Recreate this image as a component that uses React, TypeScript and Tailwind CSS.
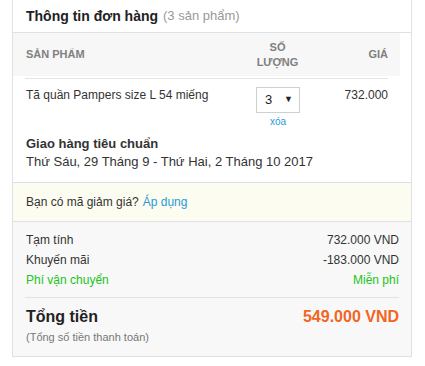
import React from 'react';

const font = { fontFamily: '"Liberation Sans", Arial, sans-serif' };

export default function App() {
  return (
    <div className="w-[425px] h-[366px] bg-white" style={font}>
      <div className="ml-[12px] w-[400px] border-x border-b border-[#dfe2e5] bg-white">
        {/* title */}
        <div className="h-[33px] border-b border-[#dfe2e5] pl-[13px] flex items-center">
          <span className="text-[14px] font-bold text-[#222]">Thông tin đơn hàng</span>
          <span className="ml-[5px] text-[13px] text-[#999]">(3 sản phẩm)</span>
        </div>

        {/* table header */}
        <div className="h-[43px] bg-[#f7f7f7] px-[12px] grid grid-cols-[220px_64px_1fr] w-[387px] items-center text-[11px] font-bold text-[#808080]">
          <div className="pl-[1px]">SẢN PHẨM</div>
          <div className="text-center leading-[15px] pl-[1px]">
            SỐ
            <br />
            LƯỢNG
          </div>
          <div className="text-right">GIÁ</div>
        </div>

        {/* product row */}
        <div className="mx-[12px] mt-[2px] w-[363px] border-t border-[#e4e4e4] grid grid-cols-[220px_64px_1fr] pt-[6px]">
          <div className="text-[12px] text-[#333] leading-[16px] pt-[2px] pl-[1px]">Tã quần Pampers size L 54 miếng</div>
          <div className="flex flex-col items-center pl-[2px]">
            <div className="mt-[2px] w-[44px] h-[26px] border border-[#cfcfcf] flex items-center justify-between pl-[8px] pr-[6px] text-[13px] text-[#222]">
              <span>3</span>
              <span className="text-[9px]">▼</span>
            </div>
            <div className="text-[10px] text-[#2a9ad6] leading-[13px] mt-[2px]">xóa</div>
          </div>
          <div className="text-right text-[12px] text-[#333] leading-[16px] pt-[2px]">732.000</div>
        </div>

        {/* shipping */}
        <div className="px-[13px] pt-[7px] pb-[11px] border-b border-[#dfe2e5]">
          <div className="text-[13px] font-bold text-[#333] leading-[18px]">Giao hàng tiêu chuẩn</div>
          <div className="text-[13px] text-[#333] leading-[18px]">Thứ Sáu, 29 Tháng 9 - Thứ Hai, 2 Tháng 10 2017</div>
        </div>

        {/* coupon */}
        <div className="h-[39px] bg-[#fcfcf0] border-b border-[#dfe2e5] px-[13px] flex items-center text-[12px] text-[#333]">
          Bạn có mã giảm giá?
          <span className="ml-[4px] text-[#2a9ad6]">Áp dụng</span>
        </div>

        {/* summary */}
        <div className="bg-[#f8f8f8] px-[12px] pt-[8px] pb-[11px] text-[12px] text-[#333]">
          <div className="flex justify-between leading-[20px] pl-[1px]">
            <span>Tạm tính</span>
            <span>732.000 VND</span>
          </div>
          <div className="flex justify-between leading-[20px] pl-[1px]">
            <span>Khuyến mãi</span>
            <span>-183.000 VND</span>
          </div>
          <div className="flex justify-between leading-[20px] pl-[1px] text-[#22c322]">
            <span>Phí vận chuyển</span>
            <span>Miễn phí</span>
          </div>
          <div className="mt-[7px] border-t border-[#e2e2e2] pt-[7px] pl-[1px] flex justify-between">
            <div>
              <div className="text-[16px] font-bold text-[#222] leading-[24px]">Tổng tiền</div>
              <div className="text-[11px] text-[#777] leading-[16px]">(Tổng số tiền thanh toán)</div>
            </div>
            <div className="text-[16px] font-bold text-[#f26522] leading-[24px]">549.000 VND</div>
          </div>
        </div>
      </div>
    </div>
  );
}
